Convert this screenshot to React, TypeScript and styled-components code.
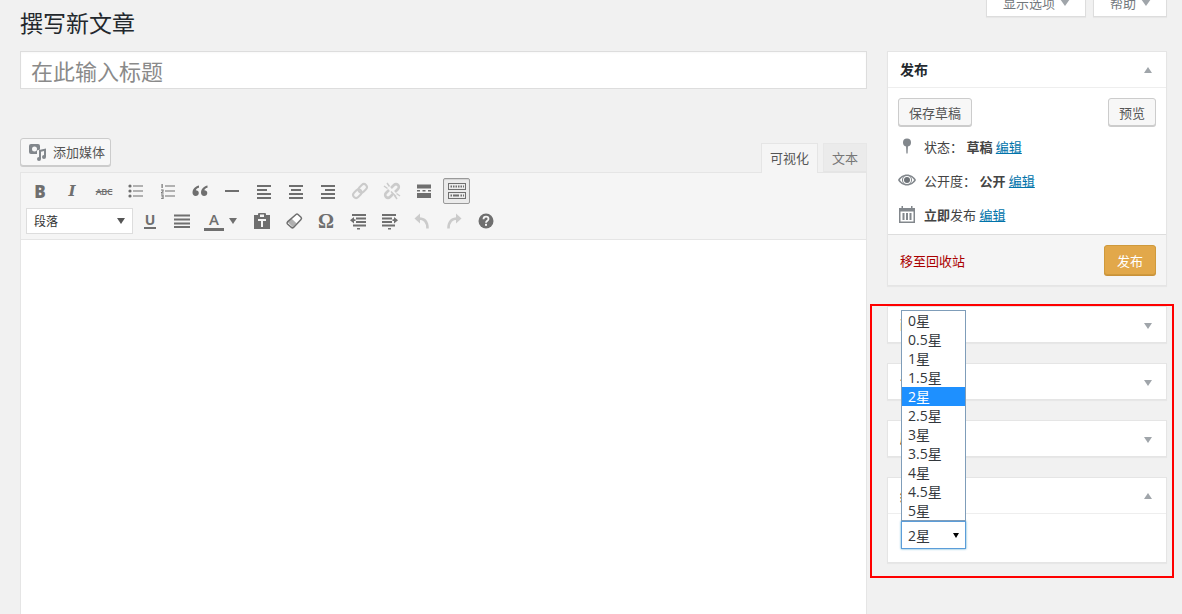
import styled, { createGlobalStyle } from 'styled-components';

const GlobalStyle = createGlobalStyle`
  html, body {
    margin: 0;
    height: 614px;
    overflow: hidden;
    background: #f1f1f1;
  }
  * {
    box-sizing: border-box;
  }
  body {
    font-family: 'Open Sans', 'Noto Sans CJK SC', sans-serif;
    font-size: 13px;
    color: #444;
  }
`;

const Page = styled.div`
  position: relative;
  height: 614px;
  overflow: hidden;
  padding: 0 15px 0 20px;
`;

const Header = styled.header`
  display: flex;
  justify-content: space-between;
  align-items: flex-start;
  height: 51px;

  h1 {
    margin: 0;
    font-size: 23px;
    font-weight: 400;
    line-height: 46px;
    color: #23282d;
  }
`;

const MetaTabs = styled.div`
  display: flex;
  gap: 7px;
  margin-top: -11px;
`;

const MetaTab = styled.div`
  display: flex;
  align-items: center;
  gap: 5px;
  height: 28px;
  padding: 0 15px 0 16px;
  background: #fff;
  border: 1px solid #ddd;
  border-top: none;
  box-shadow: 0 1px 1px rgba(0, 0, 0, 0.04);
  color: #72777c;
  line-height: 28px;
`;

const Columns = styled.div`
  display: grid;
  grid-template-columns: 847px 280px;
  gap: 20px;
  align-items: start;
`;

const MainColumn = styled.main`
  display: flex;
  flex-direction: column;
`;

const TitleInput = styled.input`
  display: block;
  width: 100%;
  height: 38px;
  padding: 2px 10px 0;
  border: 1px solid #ddd;
  background: #fff;
  outline: none;
  font-family: inherit;
  font-size: 22px;
  box-shadow: inset 0 1px 2px rgba(0, 0, 0, 0.03);

  &::placeholder {
    color: #8a8a8a;
    opacity: 1;
  }
`;

const MediaRow = styled.div`
  display: flex;
  justify-content: space-between;
  align-items: flex-end;
  height: 34px;
  margin-top: 49px;
`;

const Button = styled.button<{ $primary?: boolean }>`
  display: inline-flex;
  align-items: center;
  justify-content: center;
  height: ${(p) => (p.$primary ? '30px' : '28px')};
  padding: 0 ${(p) => (p.$primary ? '12px' : '10px')};
  border: 1px solid ${(p) => (p.$primary ? '#cf9a3c' : '#ccc')};
  border-radius: 3px;
  background: ${(p) => (p.$primary ? '#e2a84a' : '#f7f7f7')};
  box-shadow: 0 1px 0 ${(p) => (p.$primary ? '#c9913a' : '#ccc')};
  color: ${(p) => (p.$primary ? '#fff' : '#555')};
  font-family: inherit;
  font-size: 13px;
`;

const MediaButton = styled(Button)`
  align-self: flex-start;
  gap: 5px;
  padding: 0 5px 2px 7px;
  color: #555;

  svg {
    margin-top: 2px;
  }
`;

const Tabs = styled.div`
  display: flex;
  gap: 5px;
  align-items: flex-end;
`;

const Tab = styled.div<{ $active?: boolean }>`
  position: relative;
  z-index: 1;
  height: ${(p) => (p.$active ? '30px' : '29px')};
  margin-bottom: ${(p) => (p.$active ? '-1px' : '0')};
  padding: 0 8px;
  border: 1px solid ${(p) => (p.$active ? '#e5e5e5' : '#e7e7e7')};
  border-bottom: ${(p) => (p.$active ? 'none' : '1px solid #e5e5e5')};
  background: ${(p) => (p.$active ? '#f5f5f5' : '#ebebeb')};
  color: ${(p) => (p.$active ? '#555' : '#777')};
  line-height: 28px;
`;

const Editor = styled.section`
  display: flex;
  flex-direction: column;
  height: 460px;
  border: 1px solid #e5e5e5;
  background: #fff;
`;

const Toolbar = styled.div`
  display: flex;
  flex-direction: column;
  gap: 4px;
  padding: 5px 3px;
  background: #f5f5f5;
  border-bottom: 1px solid #e5e5e5;
`;

const ToolRow = styled.div`
  display: flex;
  align-items: center;
  height: 26px;
`;

const ToolButton = styled.div<{ $muted?: boolean; $wide?: boolean; $pressed?: boolean }>`
  display: flex;
  align-items: center;
  justify-content: ${(p) => (p.$wide ? 'flex-start' : 'center')};
  flex: none;
  width: ${(p) => (p.$wide ? '48px' : '32px')};
  height: 26px;
  color: ${(p) => (p.$muted ? '#cbcbcb' : '#6f6f6f')};
  ${(p) => (p.$wide ? 'padding-left: 6px; gap: 5px;' : '')}
  ${(p) =>
    p.$pressed
      ? `
    margin: 0 2px 0 3px;
    width: 27px;
    background: #ebebeb;
    border: 1px solid #999;
    border-radius: 2px;
    box-shadow: inset 0 1px 1px rgba(0, 0, 0, 0.1);
  `
      : ''}
`;

const Glyph = styled.span<{ $font?: string; $size: number; $weight?: number; $italic?: boolean }>`
  font-family: ${(p) => p.$font ?? "'Open Sans'"}, sans-serif;
  font-size: ${(p) => p.$size}px;
  font-weight: ${(p) => p.$weight ?? 700};
  font-style: ${(p) => (p.$italic ? 'italic' : 'normal')};
  line-height: 1;
`;

const StruckGlyph = styled(Glyph)`
  letter-spacing: -0.3px;
  text-decoration: line-through;
`;

const UnderGlyph = styled(Glyph)`
  display: inline-block;
  padding: 0 1px;
  border-bottom: 2px solid #6f6f6f;
`;

const ColorGlyph = styled(Glyph)`
  display: inline-block;
  width: 20px;
  padding-bottom: 1px;
  border-bottom: 3px solid #6f6f6f;
  text-align: center;
`;

const FormatSelect = styled.div`
  display: flex;
  align-items: center;
  justify-content: space-between;
  width: 107px;
  height: 26px;
  margin: 0 1px 0 2px;
  padding: 0 7px;
  background: #fff;
  border: 1px solid #ddd;
  color: #333;
  font-size: 12px;
`;

const Caret = styled.i<{ $up?: boolean; $color?: string; $half?: number; $tall?: number }>`
  display: block;
  flex: none;
  width: 0;
  height: 0;
  border-left: ${(p) => p.$half ?? 4}px solid transparent;
  border-right: ${(p) => p.$half ?? 4}px solid transparent;
  ${(p) => (p.$up ? 'border-bottom' : 'border-top')}: ${(p) => p.$tall ?? 6}px solid ${(p) => p.$color ?? '#a0a5aa'};
`;

const EditorBody = styled.div`
  flex: 1;
  background: #fff;
`;

const SideColumn = styled.aside`
  display: flex;
  flex-direction: column;
  gap: 20px;
`;

const Box = styled.section`
  background: #fff;
  border: 1px solid #e5e5e5;
  box-shadow: 0 1px 1px rgba(0, 0, 0, 0.04);
`;

const BoxHead = styled.div<{ $open?: boolean }>`
  display: flex;
  align-items: center;
  justify-content: space-between;
  height: ${(p) => (p.$open ? '36px' : '35px')};
  padding: 0 14px 0 12px;
  ${(p) => (p.$open ? 'border-bottom: 1px solid #eee;' : '')}

  h2 {
    margin: 0 0 2px;
    font-size: 14px;
    font-weight: 700;
    color: #23282d;
  }

  i {
    margin-top: ${(p) => (p.$open ? '0' : '2px')};
  }
`;

const PublishActions = styled.div`
  display: flex;
  justify-content: space-between;
  padding: 10px 10px 3px;
`;

const MetaList = styled.div`
  padding-bottom: 3px;
`;

const MetaRow = styled.div`
  display: flex;
  align-items: center;
  height: 34px;
  padding-left: 10px;
  color: #444;

  b {
    color: #444;
  }

  a {
    color: #0073aa;
    text-decoration: underline;
  }
`;

const MetaIcon = styled.svg`
  flex: none;
  width: 18px;
  height: 18px;
  margin-right: 8px;
  fill: #82878c;
`;

const PublishFooter = styled.div`
  display: flex;
  align-items: center;
  justify-content: space-between;
  height: 51px;
  padding: 0 10px 0 12px;
  background: #f5f5f5;
  border-top: 1px solid #ddd;

  a {
    color: #a00;
  }
`;

const BoxBody = styled.div`
  height: 48px;
  padding: 7px 13px;
`;

const RatingField = styled.div`
  position: relative;
  width: 65px;
`;

const RatingValue = styled.div`
  display: flex;
  align-items: center;
  justify-content: space-between;
  height: 28px;
  padding: 0 6px 0 6px;
  background: #fff;
  border: 1px solid #5b9dd9;
  box-shadow: 0 0 2px rgba(30, 140, 190, 0.8);
  color: #32373c;
  font-size: 14px;
`;

const RatingList = styled.ul`
  position: absolute;
  left: 0;
  bottom: 100%;
  z-index: 5;
  width: 65px;
  margin: 0;
  padding: 0;
  list-style: none;
  background: #fff;
  border: 1px solid #7f9db9;
`;

const RatingOption = styled.li<{ $selected?: boolean }>`
  height: 19px;
  padding-left: 6px;
  background: ${(p) => (p.$selected ? '#1e90ff' : 'transparent')};
  color: ${(p) => (p.$selected ? '#fff' : '#32373c')};
  font-size: 14px;
  line-height: 19px;
`;

const RedMark = styled.div`
  position: absolute;
  left: 870px;
  top: 304px;
  z-index: 10;
  width: 304px;
  height: 274px;
  border: 2px solid #f00;
  pointer-events: none;
`;

const Svg = ({ children, size = 20 }: { children: React.ReactNode; size?: number }) => (
  <svg width={size} height={size} viewBox="0 0 20 20" fill="currentColor">
    {children}
  </svg>
);

const Line = ({ x, y, w, h = 1.6 }: { x: number; y: number; w: number; h?: number }) => (
  <rect x={x} y={y} width={w} height={h} />
);

const aligned = (offsets: number[][]) =>
  offsets.map(([x, w], i) => <Line key={i} x={x} y={4 + i * 4} w={w} h={2} />);

const icons: Record<string, React.ReactNode> = {
  bullist: (
    <>
      <circle cx="4" cy="5" r="1.6" />
      <circle cx="4" cy="10" r="1.6" />
      <circle cx="4" cy="15" r="1.6" />
      <Line x={7} y={4.5} w={10} h={1} />
      <Line x={7} y={9.5} w={10} h={1} />
      <Line x={7} y={14.5} w={10} h={1} />
    </>
  ),
  numlist: (
    <>
      <Line x={3.5} y={3} w={1.2} h={4} />
      <path d="M3 8.5h2.6v2L4 11.6h1.7v.9H3v-1.2l1.6-1.1v-.8H3z" />
      <path d="M3 13.5h2.6V18H3v-.8h1.6v-.9H3.4v-.7h1.2v-1.2H3z" />
      <Line x={7} y={4.5} w={10} h={1} />
      <Line x={7} y={9.5} w={10} h={1} />
      <Line x={7} y={14.5} w={10} h={1} />
    </>
  ),
  quote: (
    <>
      <path d="M9 4.5C6 5 2.500 7.500 2.500 11.500c0 2 1.300 3.500 3.100 3.500s3.200-1.200 3.200-3-1.300-2.800-3-2.800C6 8 7.300 7 9 6.700z" />
      <path d="M17.500 4.500C14.500 5 11 7.500 11 11.500c0 2 1.300 3.500 3.100 3.500s3.200-1.200 3.200-3-1.300-2.800-3-2.800c.2-1.200 1.500-2.200 3.200-2.500z" />
    </>
  ),
  hr: <Line x={3} y={9} w={14} h={2} />,
  alignleft: aligned([[3, 14], [3, 10], [3, 14], [3, 14]]),
  aligncenter: aligned([[3, 14], [5, 10], [3, 14], [3, 14]]),
  alignright: aligned([[3, 14], [7, 10], [3, 14], [3, 14]]),
  link: (
    <g fill="none" stroke="currentColor" strokeWidth="2" transform="rotate(-45 10 10)">
      <rect x="1.500" y="7" width="9.500" height="6" rx="3" />
      <rect x="9" y="7" width="9.500" height="6" rx="3" />
    </g>
  ),
  unlink: (
    <>
      <g fill="none" stroke="currentColor" strokeWidth="2.600">
        <path d="M9 7l3-3a2.800 2.800 0 0 1 4 4l-3 3" />
        <path d="M11 13l-3 3a2.800 2.800 0 0 1-4-4l3-3" />
      </g>
      <g fill="none" stroke="currentColor" strokeWidth="1.500">
        <path d="M5 2l2.500 3.500M2 5l3.500 2.500" />
        <path d="M15 18l-2.500-3.500M18 15l-3.500-2.500M9 10.500l5 5" />
      </g>
    </>
  ),
  more: (
    <>
      <Line x={3} y={3.500} w={14} h={4} />
      <Line x={3} y={9} w={3} h={1.500} />
      <Line x={8.500} y={9} w={3} h={1.500} />
      <Line x={14} y={9} w={3} h={1.500} />
      <Line x={3} y={12} w={14} h={5} />
    </>
  ),
  sink: (
    <>
      <g fill="none" stroke="currentColor">
        <rect x="1.500" y="2.500" width="17" height="6" />
        <rect x="1.500" y="11.500" width="17" height="6" />
      </g>
      <path d="M3.500 4.500h1.500v2H3.500zM6 4.500h1.500v2H6zM8.500 4.500H10v2H8.500zM11 4.500h1.500v2H11zM13.500 4.500H15v2h-1.500zM16 4.500h1v2h-1z" />
      <path d="M3.500 13.500h1.500v2H3.500zM6 13.500h6v2H6zM13.500 13.500H15v2h-1.500zM16 13.500h1v2h-1z" />
    </>
  ),
  justify: (
    <>
      <Line x={2} y={3.500} w={16} h={2} />
      <Line x={2} y={7.500} w={16} h={2} />
      <Line x={2} y={11.500} w={16} h={2} />
      <Line x={2} y={15} w={16} h={2} />
    </>
  ),
  paste: (
    <path
      fillRule="evenodd"
      d="M2 4h4V3a1 1 0 0 1 1-1h6a1 1 0 0 1 1 1v1h4v14H2zM8 3.500V6h4V3.500zM6 8v2h3v6h2v-6h3V8z"
    />
  ),
  eraser: (
    <>
      <path
        d="M12 3.500a1.500 1.500 0 0 1 2 0l3 2.800a1.500 1.500 0 0 1 0 2.100l-7.500 8a1.500 1.500 0 0 1-2.100 0L3.500 13a1.500 1.500 0 0 1 0-2.100z"
        fill="#fff"
        stroke="currentColor"
        strokeWidth="1.500"
      />
      <path d="M4 11.500l3.500-4 5 4.800-3.500 4z" opacity="0.55" />
    </>
  ),
  outdent: (
    <>
      <Line x={4} y={3} w={14} h={2} />
      <Line x={8} y={6.500} w={10} h={2} />
      <Line x={8} y={10} w={10} h={2} />
      <Line x={5} y={13.500} w={13} h={2} />
      <Line x={9} y={17} w={3} h={1.500} />
      <path d="M2 9.200L6 6v2.300h1.500v1.800H6v2.400z" />
    </>
  ),
  indent: (
    <>
      <Line x={2} y={3} w={14} h={2} />
      <Line x={2} y={6.500} w={10} h={2} />
      <Line x={2} y={10} w={10} h={2} />
      <Line x={2} y={13.500} w={13} h={2} />
      <Line x={8} y={17} w={3} h={1.500} />
      <path d="M18 9.200L14 6v2.300h-1.500v1.800H14v2.400z" />
    </>
  ),
  undo: (
    <>
      <path d="M2.500 7.500L8 2.500v10z" />
      <path d="M7 7.500c5 0 8.500 3 8.500 10" fill="none" stroke="currentColor" strokeWidth="2.600" />
    </>
  ),
  redo: (
    <>
      <path d="M17.500 7.500L12 2.500v10z" />
      <path d="M13 7.500c-5 0-8.500 3-8.500 10" fill="none" stroke="currentColor" strokeWidth="2.600" />
    </>
  ),
  help: (
    <>
      <circle cx="10" cy="10" r="7.500" />
      <path d="M7.500 8.200c0-1.500 1.100-2.500 2.500-2.500s2.500.9 2.500 2.200c0 1.800-2.500 1.900-2.500 3.800" fill="none" stroke="#f5f5f5" strokeWidth="1.800" />
      <rect x="9" y="12.800" width="2" height="2" fill="#f5f5f5" />
    </>
  ),
};

const MediaIcon = () => (
  <svg width="20" height="18" viewBox="0 0 20 18" fill="#82878c">
    <path
      fillRule="evenodd"
      d="M3 1h7a2 2 0 0 1 2 2v3.500L9 7.500V11H3a2 2 0 0 1-2-2V3a2 2 0 0 1 2-2zM6.500 3.500a2.500 2.500 0 1 0 0 5 2.500 2.500 0 0 0 0-5z"
    />
    <path d="M11 7l7-1.500v8.500a2 2 0 1 1-2-2V8l-3 .7V16a2 2 0 1 1-2-2z" />
  </svg>
);

const firstRow: { key: string; muted?: boolean; glyph?: React.ReactNode }[] = [
  { key: 'b', glyph: <Glyph $size={17} $weight={800}>B</Glyph> },
  { key: 'i', glyph: <Glyph $font="'DejaVu Serif'" $size={15} $italic>I</Glyph> },
  { key: 's', glyph: <StruckGlyph $size={9} $weight={600}>ABC</StruckGlyph> },
  { key: 'bullist' },
  { key: 'numlist' },
  { key: 'quote' },
  { key: 'hr' },
  { key: 'alignleft' },
  { key: 'aligncenter' },
  { key: 'alignright' },
  { key: 'link', muted: true },
  { key: 'unlink', muted: true },
  { key: 'more' },
];

const ratings = ['0星', '0.5星', '1星', '1.5星', '2星', '2.5星', '3星', '3.5星', '4星', '4.5星', '5星'];

export default function App() {
  return (
    <Page>
      <GlobalStyle />
      <Header>
        <h1>撰写新文章</h1>
        <MetaTabs>
          <MetaTab>
            显示选项 <Caret $half={5} $tall={7} />
          </MetaTab>
          <MetaTab>
            帮助 <Caret $half={5} $tall={7} />
          </MetaTab>
        </MetaTabs>
      </Header>

      <Columns>
        <MainColumn>
          <TitleInput placeholder="在此输入标题" />
          <MediaRow>
            <MediaButton>
              <MediaIcon />
              添加媒体
            </MediaButton>
            <Tabs>
              <Tab $active>可视化</Tab>
              <Tab>文本</Tab>
            </Tabs>
          </MediaRow>
          <Editor>
            <Toolbar>
              <ToolRow>
                {firstRow.map((tool) => (
                  <ToolButton key={tool.key} $muted={tool.muted}>
                    {tool.glyph ?? <Svg>{icons[tool.key]}</Svg>}
                  </ToolButton>
                ))}
                <ToolButton $pressed>
                  <Svg>{icons.sink}</Svg>
                </ToolButton>
              </ToolRow>
              <ToolRow>
                <FormatSelect>
                  段落
                  <Caret $color="#555" />
                </FormatSelect>
                <ToolButton>
                  <UnderGlyph $size={14} $weight={700}>U</UnderGlyph>
                </ToolButton>
                <ToolButton>
                  <Svg>{icons.justify}</Svg>
                </ToolButton>
                <ToolButton $wide>
                  <ColorGlyph $size={15} $weight={600}>A</ColorGlyph>
                  <Caret $color="#6f6f6f" />
                </ToolButton>
                <ToolButton>
                  <Svg>{icons.paste}</Svg>
                </ToolButton>
                <ToolButton>
                  <Svg>{icons.eraser}</Svg>
                </ToolButton>
                <ToolButton>
                  <Glyph $font="'Liberation Serif'" $size={20} $weight={700}>Ω</Glyph>
                </ToolButton>
                <ToolButton>
                  <Svg>{icons.outdent}</Svg>
                </ToolButton>
                <ToolButton>
                  <Svg>{icons.indent}</Svg>
                </ToolButton>
                <ToolButton $muted>
                  <Svg>{icons.undo}</Svg>
                </ToolButton>
                <ToolButton $muted>
                  <Svg>{icons.redo}</Svg>
                </ToolButton>
                <ToolButton>
                  <Svg>{icons.help}</Svg>
                </ToolButton>
              </ToolRow>
            </Toolbar>
            <EditorBody />
          </Editor>
        </MainColumn>

        <SideColumn>
          <Box>
            <BoxHead $open>
              <h2>发布</h2>
              <Caret $up />
            </BoxHead>
            <PublishActions>
              <Button>保存草稿</Button>
              <Button>预览</Button>
            </PublishActions>
            <MetaList>
              <MetaRow>
                <MetaIcon viewBox="0 0 18 18">
                  <circle cx="9" cy="5.500" r="4" />
                  <path d="M8 8h2l-.4 8.500h-1.200z" />
                </MetaIcon>
                状态：&nbsp;<b>草稿</b>&nbsp;<a>编辑</a>
              </MetaRow>
              <MetaRow>
                <MetaIcon viewBox="0 0 18 18">
                  <path
                    fillRule="evenodd"
                    d="M9 3.500c4 0 7.300 2.400 9 5.500-1.700 3.100-5 5.500-9 5.500S1.700 12.100 0 9c1.700-3.100 5-5.500 9-5.500zM9 5a4 4 0 1 0 0 8 4 4 0 0 0 0-8zM1.800 9c1 1.500 2.300 2.600 3.900 3.400C4.600 11.500 4 10.300 4 9s.6-2.500 1.700-3.400C4.100 6.400 2.800 7.500 1.800 9zm14.400 0c-1-1.500-2.300-2.600-3.900-3.400C13.400 6.500 14 7.700 14 9s-.6 2.500-1.700 3.400c1.600-.8 2.900-1.900 3.900-3.400z"
                  />
                  <circle cx="9" cy="9" r="3" fill="#6e7378" />
                </MetaIcon>
                公开度：&nbsp;<b>公开</b>&nbsp;<a>编辑</a>
              </MetaRow>
              <MetaRow>
                <MetaIcon viewBox="0 0 18 18">
                  <path
                    fillRule="evenodd"
                    d="M1 3h2.500V1h1.500v2h8V1h1.500v2H17v15H1zM2.500 6.500V16.500h13V6.500zM4.500 8h2v7h-2zM8 8h2v7H8zM11.500 8h2v7h-2z"
                  />
                </MetaIcon>
                <b>立即</b>发布&nbsp;<a>编辑</a>
              </MetaRow>
            </MetaList>
            <PublishFooter>
              <a>移至回收站</a>
              <Button $primary>发布</Button>
            </PublishFooter>
          </Box>

          {['画面', '音乐', '剧情'].map((title) => (
            <Box key={title}>
              <BoxHead>
                <h2>{title}</h2>
                <Caret />
              </BoxHead>
            </Box>
          ))}

          <Box>
            <BoxHead $open>
              <h2>综合</h2>
              <Caret $up />
            </BoxHead>
            <BoxBody>
              <RatingField>
                <RatingList>
                  {ratings.map((rating) => (
                    <RatingOption key={rating} $selected={rating === '2星'}>
                      {rating}
                    </RatingOption>
                  ))}
                </RatingList>
                <RatingValue>
                  2星
                  <Caret $color="#000" $half={3} $tall={5} />
                </RatingValue>
              </RatingField>
            </BoxBody>
          </Box>
        </SideColumn>
      </Columns>
      <RedMark />
    </Page>
  );
}
